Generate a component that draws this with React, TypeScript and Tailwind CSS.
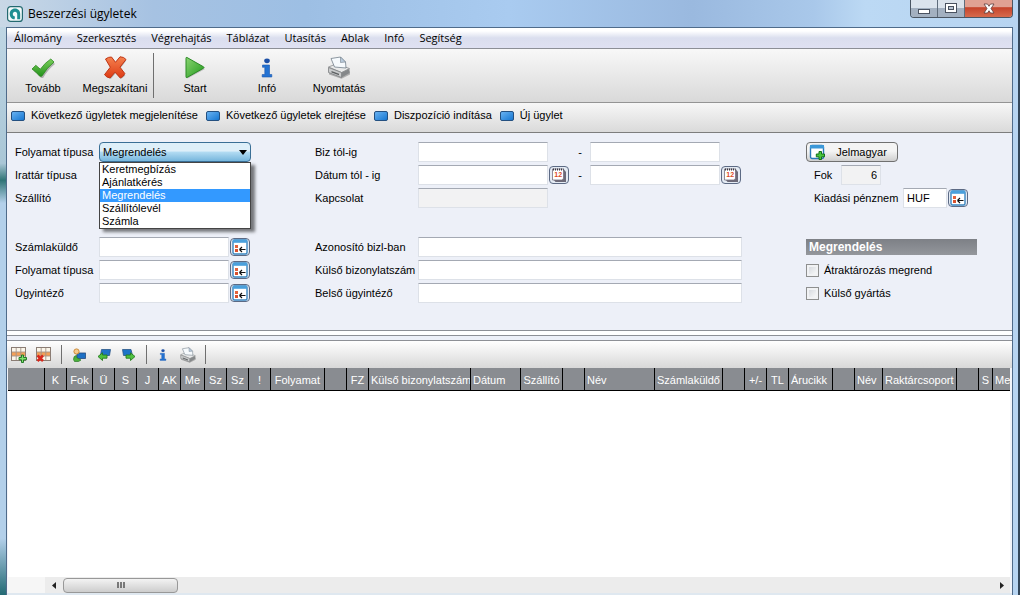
import React, { useState } from 'react';

const uiFont = 'font-["Liberation_Sans",Arial,sans-serif]';
const menuFont = 'font-["Open_Sans","Noto_Sans",sans-serif]';

const menuItems = ['Állomány', 'Szerkesztés', 'Végrehajtás', 'Táblázat', 'Utasítás', 'Ablak', 'Infó', 'Segítség'];

const actions = [
  'Következő ügyletek megjelenítése',
  'Következő ügyletek elrejtése',
  'Diszpozíció indítása',
  'Új ügylet',
];

const processTypes = ['Keretmegbízás', 'Ajánlatkérés', 'Megrendelés', 'Szállítólevél', 'Számla'];

interface Column {
  title: string;
  className: string;
}

const columns: Column[] = [
  { title: '', className: 'w-[37px]' },
  { title: 'K', className: 'w-[22px] text-center' },
  { title: 'Fok', className: 'w-[26px] text-center' },
  { title: 'Ü', className: 'w-[22px] text-center' },
  { title: 'S', className: 'w-[22px] text-center' },
  { title: 'J', className: 'w-[22px] text-center' },
  { title: 'AK', className: 'w-[22px] text-center' },
  { title: 'Me', className: 'w-[24px] text-center' },
  { title: 'Sz', className: 'w-[22px] text-center' },
  { title: 'Sz', className: 'w-[22px] text-center' },
  { title: '!', className: 'w-[22px] text-center' },
  { title: 'Folyamat', className: 'w-[54px] text-right pr-1' },
  { title: '', className: 'w-[22px]' },
  { title: 'FZ', className: 'w-[22px] text-center' },
  { title: 'Külső bizonylatszám', className: 'w-[102px] text-left pl-0.5' },
  { title: 'Dátum', className: 'w-[50px] text-left pl-0.5' },
  { title: 'Szállító', className: 'w-[42px] text-center' },
  { title: '', className: 'w-[22px]' },
  { title: 'Név', className: 'w-[70px] text-left pl-0.5' },
  { title: 'Számlaküldő', className: 'w-[68px] text-center' },
  { title: '', className: 'w-[22px]' },
  { title: '+/-', className: 'w-[22px] text-center' },
  { title: 'TL', className: 'w-[22px] text-center' },
  { title: 'Árucikk', className: 'w-[44px] text-left pl-0.5' },
  { title: '', className: 'w-[22px]' },
  { title: 'Név', className: 'w-[28px] text-left pl-0.5' },
  { title: 'Raktárcsoport', className: 'w-[74px] text-left pl-0.5' },
  { title: '', className: 'w-[22px]' },
  { title: 'S', className: 'w-[14px] text-center' },
  { title: 'Me', className: 'w-[80px] text-left pl-0.5' },
];

const AppLogo = () => (
  <svg width="16" height="16" viewBox="0 0 16 16">
    <rect x="0.6" y="0.6" width="14.800" height="14.800" rx="3" fill="#f4fbfb" stroke="#246a70" strokeWidth="1.200" />
    <path d="M8 2.500C4.900 2.500 2.700 4.900 2.700 7.900S4.900 13.300 7.600 13.300L8 10.400C6.600 10.300 5.800 9.300 5.800 8S6.700 5.700 8 5.700 10.200 6.700 10.200 8V13.300H13.200V7.900C13.200 4.900 11.100 2.500 8 2.500z" fill="#1f8f91" />
  </svg>
);

const CheckIcon = () => (
  <svg width="24" height="22" viewBox="0 0 24 22">
    <defs>
      <linearGradient id="check" x1="0" y1="0" x2="0" y2="1">
        <stop offset="0" stopColor="#7ccf5c" />
        <stop offset="1" stopColor="#23921c" />
      </linearGradient>
    </defs>
    <path d="M2 13 5.500 9.500 10 13Q15 7 20.500 3L23.500 6Q16.500 11.500 11.500 20H9.500Q6 16 2 13z" transform="translate(.6 1)" fill="#000" opacity=".25" />
    <path d="M1 12 4.800 8.300 9.300 12.200Q14.200 5.500 19.800 2L23 5Q15.800 10.800 10.800 19.200H8.800Q5.300 15 1 12z" fill="url(#check)" stroke="#2c8a20" strokeWidth="0.8" />
  </svg>
);

const CancelIcon = () => (
  <svg width="24" height="23" viewBox="0 0 24 23">
    <defs>
      <linearGradient id="cancel" x1="0" y1="0" x2="0" y2="1">
        <stop offset="0" stopColor="#f5824f" />
        <stop offset="1" stopColor="#dd3a14" />
      </linearGradient>
    </defs>
    <path d="M3 4 8.500 2 13 8 18.500 1 22.500 4 16.500 12 21.500 19 17 22.500 12 16.500 7 22.500 2 19.500 8 12z" transform="translate(.8 .5)" fill="#000" opacity=".25" />
    <path d="M2.500 3Q5.500 .8 8.500 1L12.500 6.300 17 .8Q21 .8 23 3.500L17 11.200 21.800 17.500Q20.500 21 17.300 22L12 16.200 7 22Q3.500 21.500 1.500 18.700L7.300 11.200z" fill="url(#cancel)" stroke="#bf3413" strokeWidth="1" />
  </svg>
);

const StartIcon = () => (
  <svg width="22" height="23" viewBox="0 0 22 23">
    <defs>
      <linearGradient id="start" x1="0" y1="0" x2="1" y2="1">
        <stop offset="0" stopColor="#8bd472" />
        <stop offset="1" stopColor="#1f9a1b" />
      </linearGradient>
    </defs>
    <path d="M3.500 3.500 21 13 3.500 22.500z" fill="#000" opacity=".2" />
    <path d="M3 1.500Q2 1 2 2.200V20.800Q2 22 3 21.500L19.500 12.200Q20.500 11.500 19.500 10.800z" fill="url(#start)" stroke="#2b8a25" />
  </svg>
);

const InfoIcon = ({ className }: { className: string }) => (
  <svg className={className} viewBox="0 0 12 20">
    <ellipse cx="6" cy="2.800" rx="2.800" ry="2.400" fill="#1c4fa6" />
    <path d="M1.500 7H8.500V16.500H10.800V19H1.200V16.500H3.800V9.300H1.500z" fill="#2372d2" stroke="#1a56ad" strokeWidth="0.6" />
  </svg>
);

const PrinterIcon = ({ className }: { className: string }) => (
  <svg className={className} viewBox="0 0 24 23">
    <path d="M2 13 14.500 19 23 15V18.500L14.500 22.800 2 18.500z" fill="#000" opacity=".25" />
    <path d="M1.500 11 9 8 22.500 12.500 14.500 16.500z" fill="#e9eaea" stroke="#8b8e90" strokeWidth="0.8" />
    <path d="M1.500 11.500V16.500L14.500 21.500V16.500z" fill="#c9cbcc" stroke="#7c7f81" strokeWidth="0.8" />
    <path d="M14.500 16.500 22.500 12.700V17L14.500 21.500z" fill="#85888a" />
    <path d="M4 2.500 13.500 1 18.500 6 19 12 7.500 11z" fill="#f6fafd" stroke="#73808c" strokeWidth="0.8" />
    <path d="M13.500 1 13.500 6.500 18.500 6z" fill="#b9cbdc" stroke="#73808c" strokeWidth="0.6" />
    <path d="M4.500 15 12 17.800V19.300L4.500 16.500z" fill="#5d6062" />
  </svg>
);

const ActionIcon = () => (
  <svg width="14" height="10" viewBox="0 0 14 10">
    <defs>
      <linearGradient id="action" x1="0" y1="0" x2="1" y2="1">
        <stop offset="0" stopColor="#6db5f3" />
        <stop offset="1" stopColor="#1274d0" />
      </linearGradient>
    </defs>
    <rect x="0.500" y="0.500" width="13" height="9" rx="1.500" fill="url(#action)" stroke="#245080" />
  </svg>
);

const LookupIcon = () => (
  <svg width="16" height="16" viewBox="0 0 16 16">
    <rect x="1" y="1" width="14" height="14" rx="1.500" fill="#fff" stroke="#3a86c0" strokeWidth="1.400" />
    <rect x="1" y="0.800" width="14" height="3" fill="#4aa0dc" />
    <rect x="3" y="6" width="3" height="3" fill="#e2613c" />
    <rect x="3" y="10" width="3" height="3" fill="#d8502c" />
    <path d="M7.500 10.500H13.500M7.500 10.500 10 8M7.500 10.500 10 13" stroke="#111" strokeWidth="1.200" fill="none" />
  </svg>
);

const CalendarIcon = () => (
  <svg width="16" height="16" viewBox="0 0 16 16">
    <path d="M2.500 2.500H13L15 5V15H4.500L2.500 12.500z" fill="#6d6a78" />
    <path d="M1.500 2H12.500V11Q12.500 13 10.500 13H1.500z" fill="#fff" stroke="#76717e" strokeWidth="0.800" />
    <path d="M2 2.500H12.500" stroke="#3b3945" strokeWidth="2" strokeDasharray="1 1" />
    <text x="7.200" y="9.500" textAnchor="middle" fontSize="7" fontWeight="bold" fontFamily="Liberation Sans" fill="#dc4a1c">12</text>
  </svg>
);

const LegendIcon = () => (
  <svg width="17" height="17" viewBox="0 0 17 17">
    <rect x="1.500" y="1.500" width="13" height="13" rx="1.500" fill="#fff" stroke="#2878b8" strokeWidth="1.400" />
    <rect x="1" y="1" width="14" height="3.500" fill="#3c98d8" />
    <path d="M10 7.500H12.500V10H15.500V12.800H12.500V15.500H10V12.800H7.300V10H10z" fill="#48c63c" stroke="#14701a" strokeWidth="1" />
  </svg>
);

const GridIcon = ({ remove }: { remove?: boolean }) => (
  <svg width="16" height="16" viewBox="0 0 16 16">
    <rect x="0.500" y="0.500" width="14" height="13" fill="#fbf6ea" stroke="#8b7d74" />
    <rect x="1" y="5" width="13" height="4" fill="#f3a057" />
    <path d="M5.200 1V13M9.800 1V13M1 5H14M1 9H14" stroke="#a3948b" strokeWidth="0.900" />
    {remove ? (
      <path d="M1.500 8.500 7 14M7 8.500 1.500 14" stroke="#d8281c" strokeWidth="2.600" />
    ) : (
      <path d="M10.500 8H12.500V10.500H15.500V12.800H12.500V15.500H10.500V12.800H8V10.500H10.500z" fill="#7fe06c" stroke="#14701a" strokeWidth="0.900" />
    )}
  </svg>
);

const UserScreenIcon = () => (
  <svg width="14" height="14" viewBox="0 0 14 14">
    <rect x="5" y="5" width="8.500" height="5.500" fill="#1d6fc4" stroke="#234c80" strokeWidth="0.800" />
    <circle cx="4.500" cy="3.500" r="2.600" fill="#f6c98c" stroke="#c8832c" strokeWidth="0.900" />
    <path d="M1.500 11.500Q1.500 7.500 4.500 7.500L4.500 9.500 9 12 6.500 13.500H2.500z" fill="#4bb03c" stroke="#2c7a27" strokeWidth="0.700" />
  </svg>
);

const TransferIcon = ({ forward }: { forward?: boolean }) => (
  <svg width="14" height="13" viewBox="0 0 14 13">
    {forward ? (
      <>
        <path d="M.5 1.500H9L10.500 7.500H1.500z" fill="#1d74c8" stroke="#2a5588" strokeWidth="0.800" />
        <path d="M13 8.500 8.500 4.800V7H4V10.200H8.500V12.500z" fill="#4fc23f" stroke="#267a20" strokeWidth="0.900" />
      </>
    ) : (
      <>
        <path d="M4.500 1.500H13.500L12.500 7.500H3.500z" fill="#1d74c8" stroke="#2a5588" strokeWidth="0.800" />
        <path d="M1 8.500 5.500 4.800V7H10V10.200H5.500V12.500z" fill="#4fc23f" stroke="#267a20" strokeWidth="0.900" />
      </>
    )}
  </svg>
);

interface ToolButtonProps {
  label: string;
  children: React.ReactNode;
}

const ToolButton = ({ label, children }: ToolButtonProps) => (
  <button type="button" className="flex w-[72px] flex-col items-center">
    <span className="flex h-6 items-center">{children}</span>
    <span className="leading-4">{label}</span>
  </button>
);

const Separator = () => <div className="w-px self-stretch bg-[#6f6f6f]" />;

const IconButton = ({ label, children }: ToolButtonProps) => (
  <button
    type="button"
    aria-label={label}
    className="ml-px flex h-[18px] w-5 shrink-0 items-center justify-center rounded-sm border border-[#5c6a84] bg-[#e4ebf4]"
  >
    {children}
  </button>
);

interface FieldProps {
  id: string;
  label: string;
  labelClass: string;
  inputClass: string;
  value?: string;
  readOnly?: boolean;
  children?: React.ReactNode;
}

const Field = ({ id, label, labelClass, inputClass, value, readOnly, children }: FieldProps) => (
  <div className="flex h-5 items-center">
    <label htmlFor={id} className={`shrink-0 whitespace-nowrap ${labelClass}`}>
      {label}
    </label>
    <input
      id={id}
      type="text"
      defaultValue={value}
      readOnly={readOnly}
      className={`h-5 border border-[#dde1e8] border-t-[#a4a9b3] px-[3px] outline-none ${
        readOnly ? 'bg-[#f2f2f3]' : 'bg-white'
      } ${inputClass}`}
    />
    {children}
  </div>
);

const TitleBar = () => (
  <header className={`flex h-[27px] items-start justify-between pr-[5px] pl-[7px] ${menuFont}`}>
    <div className="flex h-[27px] items-center gap-[5px]">
      <AppLogo />
      <h1 className="text-xs text-black">Beszerzési ügyletek</h1>
    </div>
    <div className="flex h-[18px] overflow-hidden rounded-b border border-t-0 border-[#4a5562]">
      <button
        type="button"
        aria-label="Kis méret"
        className="flex w-[27px] items-center justify-center border-r border-[#5f6c7b] bg-linear-to-b from-[#dbe3ec] from-50% to-[#a3b0c0] to-50%"
      >
        <svg width="12" height="12" viewBox="0 0 12 12">
          <rect x="0.500" y="6.500" width="11" height="4" fill="#fff" stroke="#4a5260" />
        </svg>
      </button>
      <button
        type="button"
        aria-label="Teljes méret"
        className="flex w-[27px] items-center justify-center border-r border-[#5f6c7b] bg-linear-to-b from-[#dbe3ec] from-50% to-[#a3b0c0] to-50%"
      >
        <svg width="12" height="12" viewBox="0 0 12 12">
          <rect x="0.500" y="0.500" width="11" height="9" fill="#fff" stroke="#4a5260" />
          <rect x="3.500" y="3.500" width="5" height="3" fill="#b9c5d3" stroke="#4a5260" />
        </svg>
      </button>
      <button
        type="button"
        aria-label="Bezárás"
        className="flex w-[47px] items-center justify-center bg-linear-to-b from-[#e0a193] from-40% via-[#c5432b] via-45% to-[#d76a4c]"
      >
        <svg width="12" height="12" viewBox="0 0 12 12">
          <path d="M1 1H4.500L6 3.300 7.500 1H11L8 5.500 11 10H7.500L6 7.700 4.500 10H1L4 5.500z" fill="#fff" stroke="#5c3a3a" strokeWidth="0.800" />
        </svg>
      </button>
    </div>
  </header>
);

const ProcessTypeSelect = () => {
  const [selected, setSelected] = useState('Megrendelés');
  const [open, setOpen] = useState(true);

  return (
    <div className="flex h-5 items-center">
      <label htmlFor="process-type" className="w-[84px] shrink-0 whitespace-nowrap">
        Folyamat típusa
      </label>
      <div className="relative w-[152px]">
        <select
          id="process-type"
          value={selected}
          onChange={(e) => setSelected(e.target.value)}
          className="block h-5 w-full appearance-none rounded-sm border border-[#3a6f96] bg-linear-to-b from-[#deeff9] from-45% via-[#b3dcf3] via-50% to-[#76b6dc] px-[3px] outline-none"
        >
          {processTypes.map((type) => (
            <option key={type}>{type}</option>
          ))}
        </select>
        <svg className="pointer-events-none absolute top-2 right-1" width="8" height="5" viewBox="0 0 8 5">
          <path d="M0 0H8L4 5z" fill="#000" />
        </svg>
        {open && (
          <ul className="absolute top-full left-0 z-10 w-full border border-[#444] bg-white shadow-[4px_3px_3px_rgba(0,0,0,0.5)]">
            {processTypes.map((type) => (
              <li key={type}>
                <button
                  type="button"
                  onClick={() => {
                    setSelected(type);
                    setOpen(false);
                  }}
                  className={`block h-[13px] w-full px-0.5 text-left leading-[13px] ${
                    type === selected ? 'bg-[#3399ff] text-white' : 'text-black'
                  }`}
                >
                  {type}
                </button>
              </li>
            ))}
          </ul>
        )}
      </div>
    </div>
  );
};

const LookupButton = () => (
  <IconButton label="Keresés">
    <LookupIcon />
  </IconButton>
);

const RangeField = ({ id, label, calendar }: { id: string; label: string; calendar?: boolean }) => (
  <Field id={`${id}-from`} label={label} labelClass="w-[103px]" inputClass="w-[130px]">
    <div className="flex w-[42px] items-center justify-between pr-2">
      {calendar ? (
        <IconButton label="Naptár">
          <CalendarIcon />
        </IconButton>
      ) : (
        <span />
      )}
      <span>-</span>
    </div>
    <input
      type="text"
      aria-label={`${label} vége`}
      className="h-5 w-[130px] border border-[#dde1e8] border-t-[#a4a9b3] bg-white px-[3px] outline-none"
    />
    {calendar && (
      <IconButton label="Naptár">
        <CalendarIcon />
      </IconButton>
    )}
  </Field>
);

const CheckField = ({ id, label }: { id: string; label: string }) => (
  <div className="flex h-5 items-center gap-[5px]">
    <input
      id={id}
      type="checkbox"
      className="size-[13px] appearance-none border border-[#8e8f8f] bg-linear-to-br from-[#cfd3d9] to-white shadow-[inset_0_0_0_2px_#f1f2f4] checked:bg-[#3399ff]"
    />
    <label htmlFor={id}>{label}</label>
  </div>
);

const FilterForm = () => (
  <form className="grid h-[197px] grid-cols-[300px_1fr_206px] bg-[#edf0f8] pt-[9px] pl-2">
    <div className="flex flex-col gap-[29px]">
      <div className="flex flex-col gap-[3px]">
        <ProcessTypeSelect />
        <span className="h-5 leading-5">Irattár típusa</span>
        <span className="h-5 leading-5">Szállító</span>
      </div>
      <div className="flex flex-col gap-[3px]">
        <Field id="invoice-sender" label="Számlaküldő" labelClass="w-[84px]" inputClass="w-[130px]">
          <LookupButton />
        </Field>
        <Field id="process" label="Folyamat típusa" labelClass="w-[84px]" inputClass="w-[130px]">
          <LookupButton />
        </Field>
        <Field id="clerk" label="Ügyintéző" labelClass="w-[84px]" inputClass="w-[130px]">
          <LookupButton />
        </Field>
      </div>
    </div>

    <div className="flex flex-col gap-[29px] pr-16">
      <div className="flex flex-col gap-[3px]">
        <RangeField id="doc" label="Biz tól-ig" />
        <RangeField id="date" label="Dátum tól - ig" calendar />
        <Field id="contact" label="Kapcsolat" labelClass="w-[103px]" inputClass="w-[130px]" readOnly />
      </div>
      <div className="flex flex-col gap-[3px]">
        <Field id="doc-id" label="Azonosító bizl-ban" labelClass="w-[103px]" inputClass="min-w-0 flex-1" />
        <Field id="external-doc" label="Külső bizonylatszám" labelClass="w-[103px]" inputClass="min-w-0 flex-1" />
        <Field id="internal-clerk" label="Belső ügyintéző" labelClass="w-[103px]" inputClass="min-w-0 flex-1" />
      </div>
    </div>

    <div className="flex flex-col gap-[29px]">
      <div className="flex flex-col gap-[3px]">
        <button
          type="button"
          className="flex h-5 w-[92px] items-center rounded-sm border border-[#707070] bg-linear-to-b from-[#f4f4f4] from-45% to-[#cfcfcf] pl-0.5"
        >
          <LegendIcon />
          <span className="flex-1 text-center">Jelmagyar</span>
        </button>
        <div className="pl-2">
          <Field id="level" label="Fok" labelClass="w-[27px]" inputClass="w-10 text-right" value="6" readOnly />
        </div>
        <div className="pl-2">
          <Field id="currency" label="Kiadási pénznem" labelClass="w-[89px]" inputClass="w-11" value="HUF">
            <LookupButton />
          </Field>
        </div>
      </div>
      <div className="flex flex-col gap-[3px]">
        <div className="flex h-5 items-center">
          <h2 className="h-4 w-[171px] bg-linear-to-b from-[#7d8086] to-[#94979c] px-[3px] text-xs leading-4 font-bold text-white">
            Megrendelés
          </h2>
        </div>
        <CheckField id="rework" label="Átraktározás megrend" />
        <CheckField id="external" label="Külső gyártás" />
      </div>
    </div>
  </form>
);

const TableToolbar = () => (
  <div className="flex h-7 items-center border-t border-[#8d9096] bg-linear-to-b from-white to-[#d8d8d8] py-1 pl-1">
    <div className="flex gap-[9px] pr-[9px]">
      <button type="button" aria-label="Sor beszúrása"><GridIcon /></button>
      <button type="button" aria-label="Sor törlése"><GridIcon remove /></button>
    </div>
    <Separator />
    <div className="flex gap-[11px] px-2.5">
      <button type="button" aria-label="Partner"><UserScreenIcon /></button>
      <button type="button" aria-label="Előző"><TransferIcon /></button>
      <button type="button" aria-label="Következő"><TransferIcon forward /></button>
    </div>
    <Separator />
    <div className="flex items-center gap-3 pr-2 pl-3">
      <button type="button" aria-label="Infó"><InfoIcon className="h-3 w-2" /></button>
      <button type="button" aria-label="Nyomtatás"><PrinterIcon className="h-4 w-[18px]" /></button>
    </div>
    <Separator />
  </div>
);

const ScrollBar = () => (
  <div className="flex h-4 items-center bg-[#ececec]">
    <div className="h-4 w-[37px] bg-[#f6f6f6]" />
    <button type="button" aria-label="Balra" className="flex w-[18px] justify-center">
      <svg width="4" height="7" viewBox="0 0 4 7"><path d="M4 0V7L0 3.500z" fill="#222" /></svg>
    </button>
    <button
      type="button"
      aria-label="Görgetés"
      className="flex h-[15px] w-[115px] items-center justify-center rounded-sm border border-[#989898] bg-linear-to-b from-[#f3f3f3] to-[#cdcdcd]"
    >
      <svg width="8" height="6" viewBox="0 0 8 6"><path d="M1 0V6M4 0V6M7 0V6" stroke="#555" strokeWidth="1.500" /></svg>
    </button>
    <button type="button" aria-label="Jobbra" className="ml-auto flex w-4 justify-center">
      <svg width="4" height="7" viewBox="0 0 4 7"><path d="M0 0V7L4 3.500z" fill="#222" /></svg>
    </button>
  </div>
);

export default function App() {
  return (
    <div
      className={`flex min-h-screen flex-col border-r-2 border-[#33465a] bg-[linear-gradient(90deg,#c9d8e6_0,#a6c2e2_15%,#9dbfe4_30%,#a9cbf0_50%,#9ab9df_68%,#a9c8ea_80%,#bcd9f4_85%,#b7d4f1_100%)] ${uiFont} text-[11px] text-black`}
    >
      <TitleBar />
      <div className="flex flex-1">
        <div className="w-1.5 bg-[linear-gradient(180deg,#bfd6e4_0,#a9c6d6_24%,#2f7476_27%,#b3d0ea_31%,#b3d0ea_90%,#236a74_100%)]" />
        <main className="mr-[5px] flex min-w-0 flex-1 flex-col border-x border-t border-[#4f6b8a] bg-[#f2f4f9]">
          <nav
            className={`flex h-[21px] items-center gap-[15px] border-b border-[#8c8f96] bg-linear-to-b from-white from-15% via-[#dadeee] via-50% to-[#dfe1f2] pl-[7px] ${menuFont}`}
          >
            {menuItems.map((item) => (
              <button key={item} type="button">
                {item}
              </button>
            ))}
          </nav>

          <div className="flex h-[54px] items-center border-b border-[#949494] bg-linear-to-b from-[#f8f8f8] to-[#d9d9d9] py-1">
            <ToolButton label="Tovább"><CheckIcon /></ToolButton>
            <ToolButton label="Megszakítani"><CancelIcon /></ToolButton>
            <div className="flex self-stretch pr-[5px] pl-0.5">
              <Separator />
            </div>
            <ToolButton label="Start"><StartIcon /></ToolButton>
            <ToolButton label="Infó"><InfoIcon className="h-5 w-3" /></ToolButton>
            <ToolButton label="Nyomtatás"><PrinterIcon className="h-[23px] w-6" /></ToolButton>
          </div>

          <div className="flex h-[30px] items-center gap-2 border-b border-[#7d7d7d] bg-linear-to-b from-[#f7f7f7] to-[#dadada] pb-1 pl-1">
            {actions.map((action) => (
              <button key={action} type="button" className="flex items-center gap-1.5 whitespace-nowrap">
                <ActionIcon />
                {action}
              </button>
            ))}
          </div>

          <FilterForm />
          <div className="h-[5px] border-t border-[#8d9096] bg-white" />
          <div className="h-[5px] border-t border-[#8d9096] bg-[#edf0f8]" />
          <TableToolbar />

          <div className="mr-0.5 ml-px flex flex-1 flex-col bg-white">
            <div className="flex-1 overflow-hidden">
              <table className="w-[1065px] table-fixed border-separate border-spacing-0">
                <thead>
                  <tr className="h-[23px] bg-[#898c91] text-white">
                    {columns.map((column, i) => (
                      <th
                        key={i}
                        scope="col"
                        className={`overflow-hidden border-r border-b border-black pt-0.5 pb-0 font-normal whitespace-nowrap ${column.className}`}
                      >
                        {column.title}
                      </th>
                    ))}
                  </tr>
                </thead>
              </table>
            </div>
            <ScrollBar />
          </div>
          <div className="h-0.5 bg-[#dfe8f0]" />
        </main>
      </div>
    </div>
  );
}
